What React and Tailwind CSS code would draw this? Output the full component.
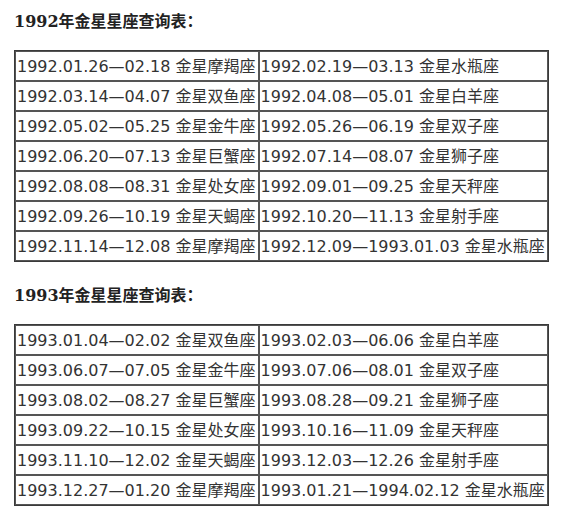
import React from 'react';

const tables = [
  {
    title: '1992年金星星座查询表：',
    rows: [
      ['1992.01.26—02.18 金星摩羯座', '1992.02.19—03.13 金星水瓶座'],
      ['1992.03.14—04.07 金星双鱼座', '1992.04.08—05.01 金星白羊座'],
      ['1992.05.02—05.25 金星金牛座', '1992.05.26—06.19 金星双子座'],
      ['1992.06.20—07.13 金星巨蟹座', '1992.07.14—08.07 金星狮子座'],
      ['1992.08.08—08.31 金星处女座', '1992.09.01—09.25 金星天秤座'],
      ['1992.09.26—10.19 金星天蝎座', '1992.10.20—11.13 金星射手座'],
      ['1992.11.14—12.08 金星摩羯座', '1992.12.09—1993.01.03 金星水瓶座'],
    ],
  },
  {
    title: '1993年金星星座查询表：',
    rows: [
      ['1993.01.04—02.02 金星双鱼座', '1993.02.03—06.06 金星白羊座'],
      ['1993.06.07—07.05 金星金牛座', '1993.07.06—08.01 金星双子座'],
      ['1993.08.02—08.27 金星巨蟹座', '1993.08.28—09.21 金星狮子座'],
      ['1993.09.22—10.15 金星处女座', '1993.10.16—11.09 金星天秤座'],
      ['1993.11.10—12.02 金星天蝎座', '1993.12.03—12.26 金星射手座'],
      ['1993.12.27—01.20 金星摩羯座', '1993.01.21—1994.02.12 金星水瓶座'],
    ],
  },
];

const VenusTable = ({ title, rows }) => (
  <div>
    <p className="mt-[10px] text-[16px] leading-[24px] font-bold text-[#222] font-['DejaVu_Serif','Noto_Sans_CJK_SC',serif]">
      {title}
    </p>
    <table className="mt-[16px] border-separate border-spacing-0 border border-[#3a3a3a] text-[16px] leading-[26px] text-[#333] font-['DejaVu_Sans','Noto_Sans_CJK_SC',sans-serif]">
      <tbody>
        {rows.map((row, i) => (
          <tr key={i}>
            {row.map((cell, j) => (
              <td key={j} className="border border-[#555] pl-[1px] pr-[2px] pt-[2px] pb-0 whitespace-nowrap">
                {cell}
              </td>
            ))}
          </tr>
        ))}
      </tbody>
    </table>
  </div>
);

export default function App() {
  return (
    <div className="w-[584px] h-[516px] bg-white px-[14px] overflow-hidden">
      <VenusTable {...tables[0]} />
      <div className="mt-[22px]">
        <VenusTable {...tables[1]} />
      </div>
    </div>
  );
}
